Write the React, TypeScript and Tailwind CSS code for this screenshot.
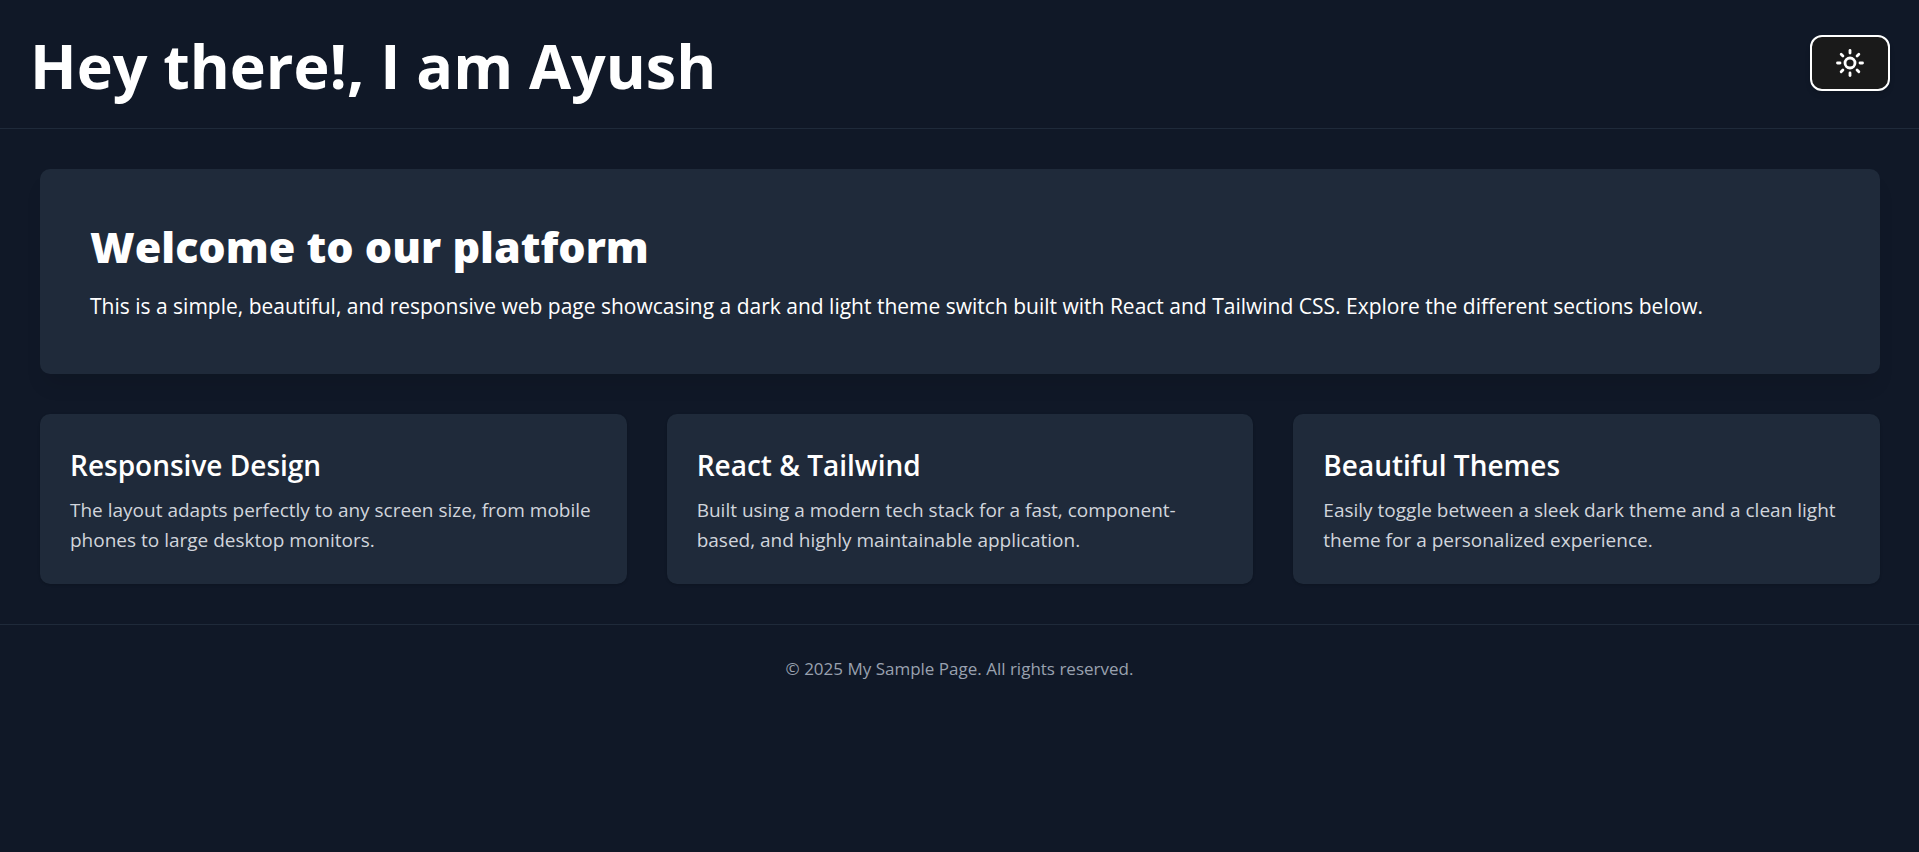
import { useState } from "react";
import { Moon, Sun } from "lucide-react";

const features = [
  {
    title: "Responsive Design",
    text: "The layout adapts perfectly to any screen size, from mobile phones to large desktop monitors.",
  },
  {
    title: "React & Tailwind",
    text: "Built using a modern tech stack for a fast, component-based, and highly maintainable application.",
  },
  {
    title: "Beautiful Themes",
    text: "Easily toggle between a sleek dark theme and a clean light theme for a personalized experience.",
  },
];

export default function App() {
  const [dark, setDark] = useState(true);

  return (
    <div
      className={`min-h-screen font-['Open_Sans','Noto_Sans',sans-serif] ${
        dark ? "bg-[#101827] text-white" : "bg-gray-100 text-gray-900"
      }`}
    >
      <header
        className={`flex items-center justify-between border-b pr-[29px] pl-[30px] pt-[15px] pb-[17px] ${
          dark ? "border-[#1f2a3a]" : "border-gray-300"
        }`}
      >
        <h1 className="pt-[6px] text-[61px] leading-[90px] font-bold">Hey there!, I am Ayush</h1>
        <button
          type="button"
          aria-label="Toggle theme"
          onClick={() => setDark(!dark)}
          className="flex h-14 w-20 cursor-pointer items-center justify-center rounded-xl border-2 border-white bg-[#1a1a1a] text-white shadow-md"
        >
          {dark ? <Sun size={30} strokeWidth={2.25} /> : <Moon size={30} strokeWidth={2.25} />}
        </button>
      </header>

      <main className="flex flex-col gap-10 py-10 pr-[39px] pl-10">
        <section
          className={`rounded-[10px] p-[50px] shadow-[0_15px_20px_-5px_rgba(0,0,0,0.1)] ${
            dark ? "bg-[#1f2a3a]" : "bg-white"
          }`}
        >
          <h2 className="text-[43px] leading-[56px] font-extrabold">Welcome to our platform</h2>
          <p className="mt-[13px] text-[21px] leading-9">
            This is a simple, beautiful, and responsive web page showcasing a dark and light theme
            switch built with React and Tailwind CSS. Explore the different sections below.
          </p>
        </section>

        <section className="grid grid-cols-1 gap-10 md:grid-cols-3">
          {features.map((feature) => (
            <article
              key={feature.title}
              className={`rounded-[10px] px-[30px] pt-[30px] pb-[29px] shadow-sm ${
                dark ? "bg-[#1f2a3a]" : "bg-white"
              }`}
            >
              <h3 className="text-[28px] leading-[42px] font-semibold">{feature.title}</h3>
              <p
                className={`mt-[9px] text-[19px] leading-[30px] ${
                  dark ? "text-gray-300" : "text-gray-600"
                }`}
              >
                {feature.text}
              </p>
            </article>
          ))}
        </section>
      </main>

      <footer
        className={`border-t px-10 py-[30px] text-center text-[17px] leading-7 ${
          dark ? "border-[#1f2a3a] text-gray-400" : "border-gray-300 text-gray-600"
        }`}
      >
        <p>© 2025 My Sample Page. All rights reserved.</p>
      </footer>
    </div>
  );
}
